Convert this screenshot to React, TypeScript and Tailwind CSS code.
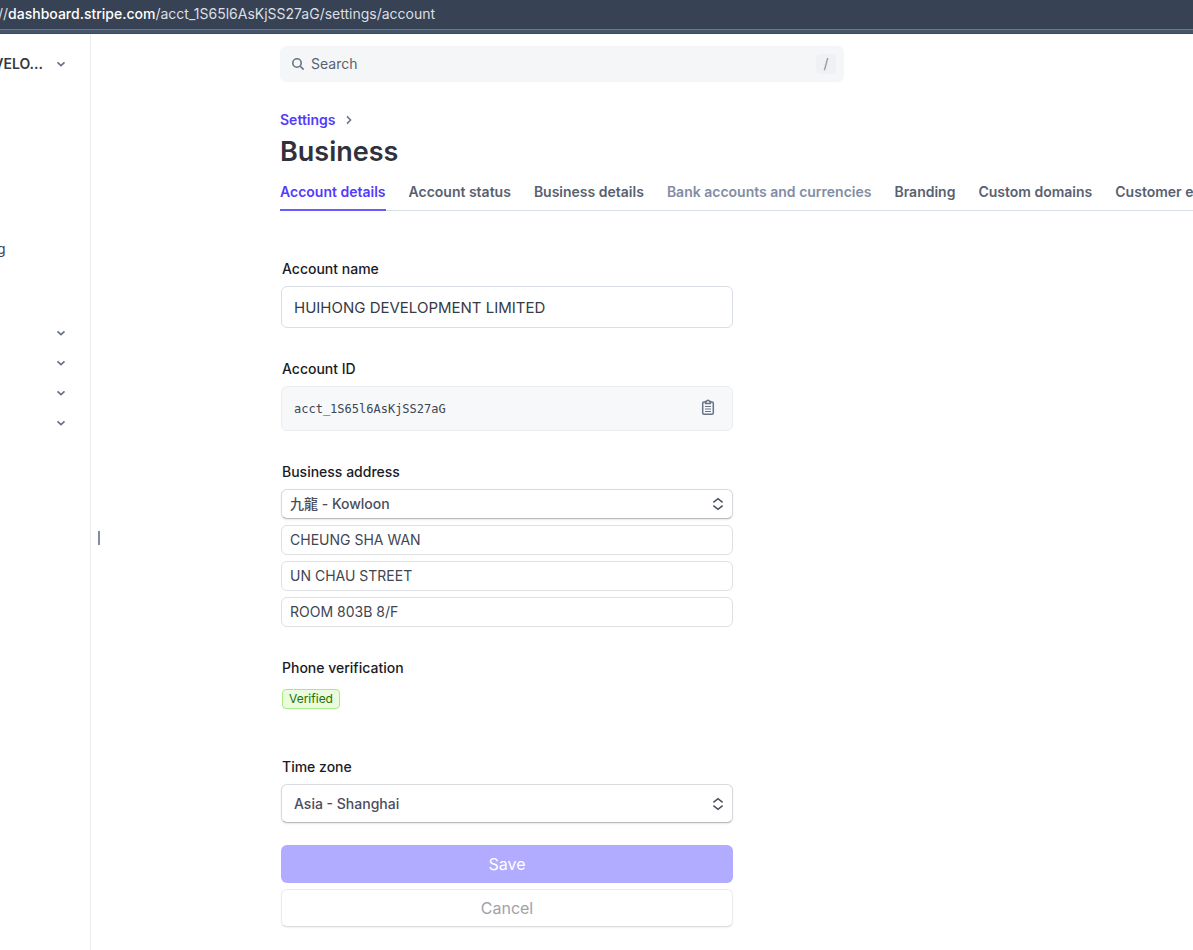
import type { ReactNode } from "react";

const tabs = [
  { label: "Account details", tone: "border-[#675dff] text-[#533afd]" },
  { label: "Account status", tone: "border-transparent text-[#596171]" },
  { label: "Business details", tone: "border-transparent text-[#596171]" },
  { label: "Bank accounts and currencies", tone: "border-transparent text-[#818da5]" },
  { label: "Branding", tone: "border-transparent text-[#596171]" },
  { label: "Custom domains", tone: "border-transparent text-[#596171]" },
  { label: "Customer emails", tone: "border-transparent text-[#596171]" },
];

const menuGroups = ["Products", "Payments", "Billing", "Reporting"];

function ChevronDown() {
  return (
    <svg className="size-3 shrink-0" viewBox="0 0 12 12" fill="none" stroke="#667085" strokeWidth="1.6" aria-hidden="true">
      <path d="M2.5 4.4 6 7.7l3.5-3.3" />
    </svg>
  );
}

function UpDown() {
  return (
    <svg
      className="pointer-events-none absolute top-1/2 right-2 size-3.5 -translate-y-1/2"
      viewBox="0 0 14 14"
      fill="none"
      stroke="#474e5a"
      strokeWidth="1.4"
      aria-hidden="true"
    >
      <path d="M2.4 5.4 7 1.6l4.6 3.8M2.4 8.6 7 12.4l4.6-3.8" />
    </svg>
  );
}

function Field({ label, id, children }: { label: string; id: string; children: ReactNode }) {
  return (
    <div className="flex flex-col gap-[7px]">
      <label htmlFor={id} className="px-px text-sm leading-5 font-medium text-[#1a1b25]">
        {label}
      </label>
      {children}
    </div>
  );
}

const addressInput =
  "h-[30px] w-full rounded-md border border-[#dfe0e3] bg-white px-2 pb-0.5 text-sm text-[#414552] outline-none";
const selectStyle =
  "w-full appearance-none rounded-md border border-[#d8dadd] border-b-[#b9bbbf] bg-white text-sm font-medium text-[#4a4e5b] shadow-[0_1px_2px_rgba(0,0,0,0.1)] outline-none";

export default function App() {
  return (
    <div className="flex min-h-screen flex-col overflow-hidden bg-white font-['Inter','Noto_Sans_CJK_TC',sans-serif]">
      <header className="flex h-[34px] flex-col border-b border-[#3b4859] bg-[#46566b]">
        <div className="flex h-[30px] items-center border-b border-[#6d7a8b] bg-[#374254] pb-0.5 text-sm leading-5 whitespace-nowrap text-[#dcdfe3]">
          <span className="-ml-0.5">//</span>
          <span className="font-medium text-white">dashboard.stripe.com</span>
          <span>/acct_1S65l6AsKjSS27aG/settings/account</span>
        </div>
      </header>

      <div className="flex grow">
        <nav aria-label="Main" className="w-[91px] shrink-0 overflow-hidden border-r border-[#ebeef1] pt-5">
          <button type="button" className="flex h-5 w-full items-center justify-end gap-3 pr-[23px] text-sm font-semibold text-[#353a44]">
            VELO...
            <ChevronDown />
          </button>
          <a href="#g" className="mt-[165px] -ml-[3px] block text-sm leading-5 text-[#414552]">
            g
          </a>
          <div className="mt-[59px] flex flex-col">
            {menuGroups.map((name) => (
              <button key={name} type="button" aria-label={name} className="flex h-[30px] items-center justify-end pr-[23px]">
                <ChevronDown />
              </button>
            ))}
          </div>
        </nav>

        <div className="flex w-[189px] shrink items-center pt-[90px] pl-[7px]">
          <div className="h-3.5 w-0.5 bg-[#818da5]" />
        </div>

        <main className="w-0 grow pt-3">
          <label className="flex h-9 max-w-[564px] items-center rounded-md bg-[#f5f6f8] pr-2 pl-3">
            <svg className="size-3" viewBox="0 0 12 12" fill="none" stroke="#687385" strokeWidth="1.6" aria-hidden="true">
              <circle cx="5" cy="5" r="4.2" />
              <path d="m8.2 8.2 3.4 3.4" />
            </svg>
            <input
              type="search"
              aria-label="Search"
              placeholder="Search"
              className="ml-[7px] h-5 grow bg-transparent text-sm text-[#596171] outline-none placeholder:text-[#596171]"
            />
            <kbd className="flex h-5 w-5 items-center justify-center rounded bg-[#eff1f4] font-['Inter',sans-serif] text-sm text-[#87898e]">
              /
            </kbd>
          </label>

          <div className="mt-7 flex h-5 items-center gap-2 text-sm font-semibold text-[#533afd]">
            <a href="#settings">Settings</a>
            <svg className="size-2.5" viewBox="0 0 10 10" fill="none" stroke="#687385" strokeWidth="1.5" aria-hidden="true">
              <path d="M3 1.4 6.6 5 3 8.6" />
            </svg>
          </div>
          <h1 className="mt-1 text-[27px] leading-9 font-semibold text-[#30313d]">Business</h1>

          <div className="mt-3 overflow-hidden">
            <div className="flex gap-[23px] bg-[linear-gradient(#d8dee4,#d8dee4)] bg-[length:100%_1px] bg-bottom bg-no-repeat">
              {tabs.map((tab) => (
                <a
                  key={tab.label}
                  href="#tab"
                  className={`h-[29px] shrink-0 border-b-2 text-sm leading-5 font-semibold whitespace-nowrap ${tab.tone}`}
                >
                  {tab.label}
                </a>
              ))}
            </div>
          </div>

          <form className="mt-12 ml-px flex max-w-[452px] flex-col pb-6">
            <div className="flex flex-col gap-[31px]">
              <Field label="Account name" id="name">
                <input
                  id="name"
                  defaultValue="HUIHONG DEVELOPMENT LIMITED"
                  className="h-[42px] w-full rounded-md border border-[#d8dee4] bg-white px-3 text-[15px] text-[#353a44] outline-none"
                />
              </Field>

              <Field label="Account ID" id="account-id">
                <div className="flex h-[45px] items-center rounded-md border border-[#ebeef1] bg-[#f6f8fa] pr-4 pl-3">
                  <input
                    id="account-id"
                    readOnly
                    value="acct_1S65l6AsKjSS27aG"
                    className="grow bg-transparent font-['DejaVu_Sans_Mono',monospace] text-xs text-[#414552] outline-none"
                  />
                  <button type="button" aria-label="Copy account ID" className="pb-1">
                    <svg className="size-4" viewBox="0 0 16 16" fill="none" stroke="#687385" strokeWidth="1.5" aria-hidden="true">
                      <path d="M5.6 2.9H3.9a1.2 1.2 0 0 0-1.2 1.2v9.9a1.2 1.2 0 0 0 1.2 1.2h8.2a1.2 1.2 0 0 0 1.2-1.2V4.1a1.2 1.2 0 0 0-1.2-1.2h-1.7" />
                      <path d="M5.6 2.4h.8a1.7 1.7 0 0 1 3.2 0h.8v2.2H5.6Z" />
                      <path d="M5 7.5h6M5 10h6M5 12.5h6" strokeWidth="1.1" />
                    </svg>
                  </button>
                </div>
              </Field>

              <Field label="Business address" id="area">
                <div className="flex flex-col gap-1.5">
                  <div className="relative">
                    <select id="area" className={`h-[30px] px-2 ${selectStyle}`}>
                      <option>九龍 - Kowloon</option>
                    </select>
                    <UpDown />
                  </div>
                  <input aria-label="District" defaultValue="CHEUNG SHA WAN" className={addressInput} />
                  <input aria-label="Street" defaultValue="UN CHAU STREET" className={addressInput} />
                  <input aria-label="Unit" defaultValue="ROOM 803B 8/F" className={addressInput} />
                </div>
              </Field>

              <div className="flex flex-col items-start gap-[11px] px-px text-sm leading-5 font-medium text-[#1a1b25]">
                Phone verification
                <span className="flex h-5 items-center rounded border border-[#a6eb84] bg-[#eafcdd] px-1.5 text-xs font-normal text-[#217005]">
                  Verified
                </span>
              </div>
            </div>

            <div className="mt-12">
              <Field label="Time zone" id="zone">
                <div className="relative">
                  <select id="zone" className={`h-[39px] px-3 ${selectStyle}`}>
                    <option>Asia - Shanghai</option>
                  </select>
                  <UpDown />
                </div>
              </Field>
            </div>

            <div className="mt-[22px] flex flex-col gap-1.5">
              <button type="button" className="h-[38px] rounded-md bg-[#b1acff] text-base text-white">
                Save
              </button>
              <button
                type="button"
                className="h-[38px] rounded-md border border-[#ebebed] border-b-[#dcdcde] bg-white text-base text-[#a0a2a9] shadow-[0_1px_2px_rgba(0,0,0,0.06)]"
              >
                Cancel
              </button>
            </div>
          </form>
        </main>
      </div>
    </div>
  );
}
